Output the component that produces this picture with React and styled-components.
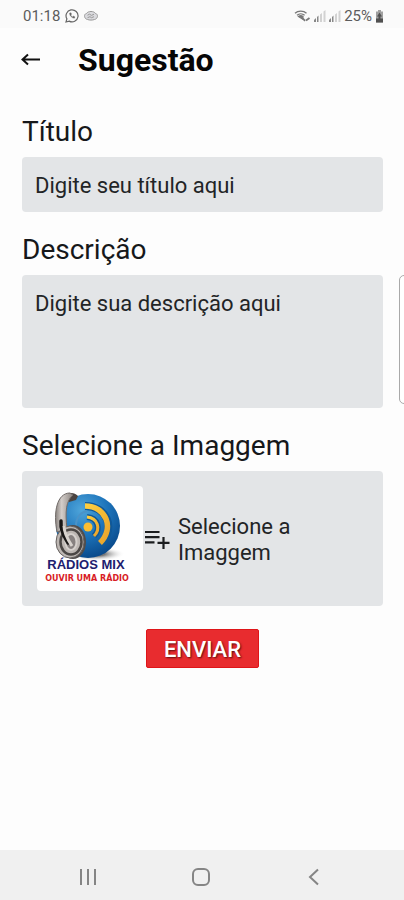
import React from "react";
import styled, { createGlobalStyle } from "styled-components";

const GlobalStyle = createGlobalStyle`
  *, *::before, *::after { box-sizing: border-box; }
  body {
    margin: 0;
    background: #fdfdfd;
    color: #16181a;
    font-family: Roboto, "Liberation Sans", sans-serif;
  }
`;

const Screen = styled.div`
  position: relative;
  display: flex;
  flex-direction: column;
  min-height: 100vh;
  overflow: hidden;
`;

const StatusBar = styled.div`
  display: flex;
  align-items: center;
  justify-content: space-between;
  height: 28px;
  padding: 4px 20px 0 23px;
  background: #fafafa;
  color: #5c5c5c;
  font-size: 15px;
  line-height: 24px;
`;

const StatusGroup = styled.div`
  display: flex;
  align-items: center;
  gap: ${({ $gap }) => $gap}px;
`;

const Header = styled.header`
  display: flex;
  align-items: center;
  gap: 36px;
  height: 64px;
  padding: 0 20px;
`;

const BackButton = styled.button`
  display: flex;
  padding: 0;
  border: 0;
  background: none;
  color: #111;
  cursor: pointer;
`;

const Title = styled.h1`
  margin: 0;
  color: #060606;
  font-size: 32px;
  line-height: 40px;
  font-weight: 700;
`;

const Form = styled.form`
  display: flex;
  flex-direction: column;
  gap: 21px;
  padding: 23px 21px 23px 22px;
`;

const Field = styled.div`
  display: flex;
  flex-direction: column;
  gap: 8px;
`;

const Label = styled.label`
  font-size: 28px;
  line-height: 34px;
`;

const fieldBox = `
  display: block;
  width: 100%;
  margin: 0;
  border: 0;
  border-radius: 4px;
  background: #e3e5e7;
  color: #222426;
  font-family: inherit;
  font-size: 22px;
  line-height: 26px;
  &::placeholder { color: #222426; opacity: 1; }
`;

const TextInput = styled.input`
  ${fieldBox}
  height: 55px;
  padding: 1px 13px 0;
`;

const TextArea = styled.textarea`
  ${fieldBox}
  height: 133px;
  padding: 16px 13px;
  resize: none;
`;

const Picker = styled.label`
  display: flex;
  align-items: center;
  padding: 15px;
  border-radius: 4px;
  background: #e3e5e7;
  color: #222426;
  font-size: 22px;
  line-height: 26px;
  cursor: pointer;
`;

const PickerText = styled.span`
  padding-top: 2px;
`;

const HiddenFile = styled.input`
  position: absolute;
  width: 1px;
  height: 1px;
  opacity: 0;
`;

const Thumb = styled.span`
  display: flex;
  flex: none;
  border-radius: 4px;
  overflow: hidden;
  background: #fff;
`;

const PickerIcon = styled.span`
  display: flex;
  flex: none;
  margin: 0 8px 0 1px;
`;

const SubmitButton = styled.button`
  align-self: center;
  height: 39px;
  margin-top: 2px;
  padding: 2px 17px 0;
  border: 1px solid #df1519;
  border-radius: 2px;
  background: #e82c2f;
  color: #fff;
  font-family: inherit;
  font-size: 22px;
  line-height: 26px;
  font-weight: 500;
  text-shadow: 1px 1px 2px #5a0d0d;
  cursor: pointer;
`;

const EdgeHandle = styled.div`
  position: absolute;
  top: 275px;
  right: -6px;
  width: 11px;
  height: 129px;
  border: 1px solid #a9a9a9;
  border-radius: 5px;
  background: #fff;
`;

const NavBar = styled.nav`
  display: grid;
  grid-template-columns: repeat(3, 1fr);
  height: 50px;
  margin-top: auto;
  padding: 3px 33px 0 31px;
  background: #f0f0f0;
`;

const NavButton = styled.button`
  display: flex;
  align-items: center;
  justify-content: center;
  padding: 0;
  border: 0;
  background: none;
  color: #858585;
  cursor: pointer;
`;

function ChatIcon() {
  return (
    <svg width="14" height="14" viewBox="0 0 14 14" fill="none" stroke="#666" strokeWidth="1.2" aria-hidden="true">
      <path d="M1 13l.9-3.1A6 6 0 1 1 4.200 12.100z" />
      <path d="M4.600 4.100c-.5 2 2.300 5.300 4.800 5.100l.6-1.300-1.500-.9-.8.8C6.600 7.300 6 6.500 5.900 5.900l.7-.6-.6-1.600z" fill="#666" strokeWidth="0.300" />
    </svg>
  );
}

function MaskIcon() {
  return (
    <svg width="14" height="10" viewBox="0 0 14 10" fill="none" stroke="#999" aria-hidden="true">
      <path d="M2.500 2.500C4-.2 10-.2 11.500 2.500 14.500 3 14 8 10.500 8.500c-2 .8-5 .8-7 0C0 8-.5 3 2.500 2.500z" fill="#dadade" />
      <path d="M3.500 4.200l2-1 2 1.200 2.500-1.200M3.500 6.700l2.500-1 1.500 1 2.500-1" />
    </svg>
  );
}

function WifiIcon() {
  return (
    <svg width="17" height="12" viewBox="0 0 17 12" fill="none" stroke="#777" strokeWidth="1.300" aria-hidden="true">
      <path d="M1 3.200C4 .4 9.500.4 12.500 3.200M3 5.300c2.200-2 5.400-2 7.600 0" />
      <path d="M4.500 6.500c1.300-1 3.200-1 4.500 0L8.500 9z" fill="#777" />
      <path d="M8.500 8l2.500 2.800M12 10.500L15.500 8" strokeWidth="1.800" />
    </svg>
  );
}

function SignalIcon() {
  return (
    <svg width="12" height="12" viewBox="0 0 12 12" aria-hidden="true">
      <path d="M0 10l2-2v4H0zM3 7l1.500-1.500V12H3z" fill="#888" />
      <path d="M6 4.500L8 3v9H6zM9.500 1.500L11.500 0v12h-2z" fill="#d2d2d2" />
    </svg>
  );
}

function BatteryIcon() {
  return (
    <svg width="9" height="13" viewBox="0 0 9 13" aria-hidden="true">
      <path d="M3 0h3v1.500h2V12.500H1V1.500h2z" fill="#a0a0a0" />
      <path d="M4.500 2.500l2.500 4H5.500v2H8V12.500H1V8.500h2.500v-2H2z" fill="#505050" />
    </svg>
  );
}

function ArrowIcon() {
  return (
    <svg width="22" height="16" viewBox="0 0 22 16" fill="none" stroke="currentColor" strokeWidth="2" aria-hidden="true">
      <path d="M20 7.500H2.500M8 2.500l-5.500 5 5.500 5" />
    </svg>
  );
}

function PlaylistAddIcon() {
  return (
    <svg width="26" height="22" viewBox="0 0 26 22" fill="none" stroke="#1b1d1f" strokeWidth="2.200" aria-hidden="true">
      <path d="M1 4h14.500M1 9.200h14.500M1 14.400h9.500M19.500 9v12M13.500 14.800h12" />
    </svg>
  );
}

function RadioLogo() {
  return (
    <svg width="106" height="105" viewBox="0 0 106 105" role="img" aria-label="Rádios Mix, ouvir uma rádio">
      <defs>
        <radialGradient id="globe" cx="0.4" cy="0.25" r="0.8">
          <stop offset="0" stopColor="#4fa5da" />
          <stop offset="0.5" stopColor="#1d74bb" />
          <stop offset="1" stopColor="#074586" />
        </radialGradient>
        <linearGradient id="band" x1="0" x2="1">
          <stop offset="0" stopColor="#8a8480" />
          <stop offset="0.35" stopColor="#d3cdc9" />
          <stop offset="1" stopColor="#8a8480" />
        </linearGradient>
        <linearGradient id="wave" x1="0" x2="1" y2="1">
          <stop offset="0" stopColor="#ffd040" />
          <stop offset="1" stopColor="#e9a32b" />
        </linearGradient>
        <radialGradient id="shade">
          <stop offset="0.3" stopColor="#555" stopOpacity="0.800" />
          <stop offset="1" stopColor="#fff" stopOpacity="0" />
        </radialGradient>
      </defs>
      <ellipse cx="59" cy="68" rx="29" ry="7" fill="url(#shade)" />
      <circle cx="51" cy="40" r="32" fill="url(#globe)" />
      <g fill="none">
        <path d="M48 20C70 20 79 42 64 58" stroke="#105898" strokeWidth="8" />
        <path d="M48 20C69 20 78 42 63 57" stroke="url(#wave)" strokeWidth="5.500" />
        <path d="M50 31C61 32 64 43 57 50" stroke="#105898" strokeWidth="6" />
        <path d="M50 31C61 32 64 43 57 50" stroke="url(#wave)" strokeWidth="3" />
        <path d="M39 40c0-9 5-14 11-15" stroke="#4b93c8" strokeWidth="2" />
      </g>
      <circle cx="51" cy="41" r="4.500" fill="#fbbd31" />
      <path d="M28 11c3-5 9-5 13-1l-2 4-7 2z" fill="#4b4441" />
      <path d="M20 46C16 26 20 7 33 7l3 2C29 15 28 25 30 43z" fill="url(#band)" stroke="#716b68" />
      <ellipse cx="36" cy="56" rx="13" ry="17" fill="#514d4c" />
      <ellipse cx="33" cy="56" rx="14" ry="16" fill="#bdb7b3" stroke="#65605e" />
      <ellipse cx="34" cy="56" rx="10.500" ry="12.500" fill="none" stroke="#4b4745" strokeWidth="2.500" />
      <ellipse cx="34" cy="56" rx="5.500" ry="8" fill="#878180" stroke="#d5d0cc" strokeWidth="2" />
      <path d="M24 35c-1 8 3 15 7 22" fill="none" stroke="#191716" strokeWidth="3.500" strokeLinecap="round" />
      <path d="M27 40c0 7 4 14 8 20" fill="none" stroke="#d8d3ce" strokeWidth="3" />
      <text x="49" y="83" textAnchor="middle" fill="#20206f" fontFamily="Liberation Sans, sans-serif" fontSize="13" fontWeight="700">RÁDIOS MIX</text>
      <text x="50" y="95" textAnchor="middle" fill="#d81c26" fontFamily="DejaVu Sans, sans-serif" fontSize="8" fontWeight="700">OUVIR UMA RÁDIO</text>
    </svg>
  );
}

export default function App() {
  return (
    <Screen>
      <GlobalStyle />
      <StatusBar>
        <StatusGroup $gap={5}>
          <span>01:18</span>
          <ChatIcon />
          <MaskIcon />
        </StatusGroup>
        <StatusGroup $gap={3}>
          <WifiIcon />
          <SignalIcon />
          <SignalIcon />
          <span>25%</span>
          <BatteryIcon />
        </StatusGroup>
      </StatusBar>
      <Header>
        <BackButton type="button" aria-label="Voltar">
          <ArrowIcon />
        </BackButton>
        <Title>Sugestão</Title>
      </Header>
      <Form onSubmit={(event) => event.preventDefault()}>
        <Field>
          <Label htmlFor="titulo">Título</Label>
          <TextInput id="titulo" type="text" placeholder="Digite seu título aqui" />
        </Field>
        <Field>
          <Label htmlFor="descricao">Descrição</Label>
          <TextArea id="descricao" placeholder="Digite sua descrição aqui" />
        </Field>
        <Field>
          <Label htmlFor="imagem">Selecione a Imaggem</Label>
          <Picker>
            <HiddenFile id="imagem" type="file" accept="image/*" />
            <Thumb>
              <RadioLogo />
            </Thumb>
            <PickerIcon>
              <PlaylistAddIcon />
            </PickerIcon>
            <PickerText>Selecione a Imaggem</PickerText>
          </Picker>
        </Field>
        <SubmitButton type="submit">ENVIAR</SubmitButton>
      </Form>
      <EdgeHandle />
      <NavBar>
        <NavButton type="button" aria-label="Recentes">
          <svg width="18" height="18" viewBox="0 0 18 18" fill="none" stroke="currentColor" strokeWidth="2" aria-hidden="true">
            <path d="M2 1v16M9 1v16M16 1v16" />
          </svg>
        </NavButton>
        <NavButton type="button" aria-label="Início">
          <svg width="20" height="20" viewBox="0 0 20 20" fill="none" stroke="currentColor" strokeWidth="2" aria-hidden="true">
            <rect x="2" y="2" width="16" height="16" rx="5" />
          </svg>
        </NavButton>
        <NavButton type="button" aria-label="Voltar à tela anterior">
          <svg width="12" height="18" viewBox="0 0 12 18" fill="none" stroke="currentColor" strokeWidth="2" aria-hidden="true">
            <path d="M10 1.500L2 9l8 7.500" />
          </svg>
        </NavButton>
      </NavBar>
    </Screen>
  );
}
